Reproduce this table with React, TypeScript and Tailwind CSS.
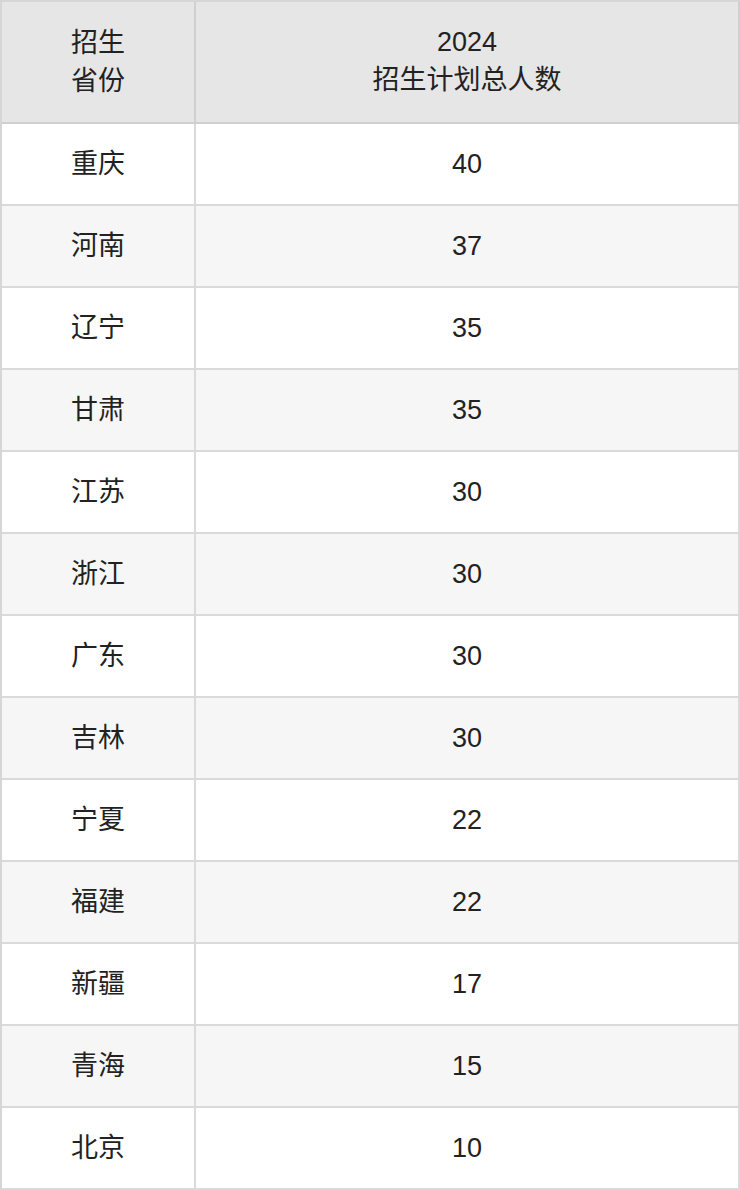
import React from "react";

const rows: [string, string][] = [
  ["重庆", "40"],
  ["河南", "37"],
  ["辽宁", "35"],
  ["甘肃", "35"],
  ["江苏", "30"],
  ["浙江", "30"],
  ["广东", "30"],
  ["吉林", "30"],
  ["宁夏", "22"],
  ["福建", "22"],
  ["新疆", "17"],
  ["青海", "15"],
  ["北京", "10"],
];

export default function App() {
  return (
    <div
      className="w-[740px] bg-white text-[#222] text-[27px]"
      style={{ fontFamily: '"Liberation Sans", "Noto Sans CJK SC", sans-serif' }}
    >
      <div className="border-l-2 border-t-2 border-[#d6d6d6]">
        <div className="flex h-[122px] bg-[#e6e6e6] leading-[38px]">
          <div className="w-[194px] shrink-0 border-r-2 border-b-2 border-[#d0d0d0] flex flex-col items-center justify-center">
            <span>招生</span>
            <span>省份</span>
          </div>
          <div className="flex-1 border-r-2 border-b-2 border-[#d0d0d0] flex flex-col items-center justify-center pb-[2px]">
            <span>2024</span>
            <span>招生计划总人数</span>
          </div>
        </div>
        {rows.map(([prov, num], i) => (
          <div
            key={prov}
            className={"flex h-[82px] " + (i % 2 === 1 ? "bg-[#f6f6f6]" : "bg-white")}
          >
            <div className="w-[194px] shrink-0 border-r-2 border-b-2 border-[#dadada] flex items-center justify-center">
              {prov}
            </div>
            <div className="flex-1 border-r-2 border-b-2 border-[#dadada] flex items-center justify-center">
              {num}
            </div>
          </div>
        ))}
      </div>
    </div>
  );
}
